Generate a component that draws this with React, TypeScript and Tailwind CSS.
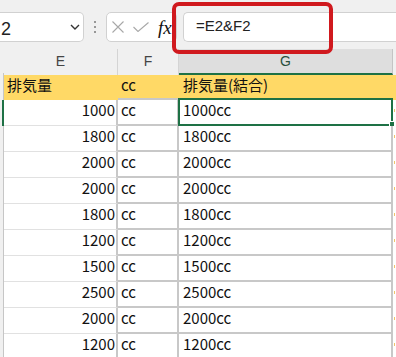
const volumes = [1000, 1800, 2000, 2000, 1800, 1200, 1500, 2500, 2000, 1200];

function DataRow({ value, active }: { value: number; active: boolean }) {
  return (
    <div className="grid h-[26px] grid-cols-[4px_114px_61px_214px_3px]">
      <div
        className={
          active
            ? 'bg-[#f0f0f0] border-r-2 border-r-[#1e7145]'
            : 'bg-[#f0f0f0] border-r border-r-[#c6c6c6]'
        }
      />
      <div className="border-b border-b-[#e1e1e1] border-r-2 border-r-[#c8c8c8] pr-[1px] text-right leading-[20px]">
        {value}
      </div>
      <div className="border-b-2 border-r-2 border-[#c8c8c8] pl-[3px] leading-[20px]">cc</div>
      <div className="relative border-b-2 border-r-2 border-[#c8c8c8] pl-[4px] leading-[20px]">
        {value}cc
        {active && (
          <>
            <div className="absolute -left-[1px] -top-[2px] -right-[2px] -bottom-[2px] border-2 border-[#1e7145]" />
            <div className="absolute -bottom-[3px] -right-[4px] h-[6px] w-[6px] border border-white bg-[#1e7145]" />
          </>
        )}
      </div>
      <div className="pl-[1px] pt-[9px]">
        <div className="h-[3px] w-[1px] bg-[#f0c36a]" />
      </div>
    </div>
  );
}

export default function App() {
  return (
    <div className="relative h-[357px] w-[396px] overflow-hidden bg-white font-['Noto_Sans_CJK_JP',sans-serif] text-[15px] text-[#111]">
      {/* formula bar */}
      <div className="flex h-[49px] items-start bg-[#f0f0f0] pt-[12px]">
        <div className="flex h-[30px] w-[84px] items-start justify-between rounded-r-[5px] border border-l-0 border-[#d1d1d1] bg-white pr-[3px]">
          <span className="pl-[1px] font-['Liberation_Sans',sans-serif] text-[18px] leading-[32px] text-[#222]">2</span>
          <svg className="mt-[11px]" width="10" height="6" viewBox="0 0 10 6">
            <polyline points="1,1 5,5 9,1" fill="none" stroke="#333" strokeWidth="1.4" />
          </svg>
        </div>
        <div className="ml-[10px] mt-[9px] flex flex-col gap-[3px]">
          <div className="h-[2px] w-[2px] rounded-full bg-[#7a7a7a]" />
          <div className="h-[2px] w-[2px] rounded-full bg-[#7a7a7a]" />
          <div className="h-[2px] w-[2px] rounded-full bg-[#7a7a7a]" />
        </div>
        <div className="ml-[10px] flex h-[30px] w-[71px] items-center rounded-[5px] border border-[#d1d1d1] bg-white pl-[5px]">
          <svg width="12" height="12" viewBox="0 0 12 12">
            <path d="M0.5 0.5 L11.5 11.5 M11.5 0.5 L0.5 11.5" stroke="#a8a8a8" strokeWidth="1.1" />
          </svg>
          <svg className="ml-[9px]" width="16" height="10" viewBox="0 0 16 10">
            <polyline points="0.5,5 5,9.5 15.5,0.5" fill="none" stroke="#a8a8a8" strokeWidth="1.1" />
          </svg>
          <span className="ml-[9px] font-['Liberation_Serif',serif] text-[19px] italic leading-none text-[#111]">fx</span>
        </div>
        <div className="ml-[6px] h-[30px] flex-1 rounded-l-[5px] border border-r-0 border-[#d1d1d1] bg-white pl-[12px] font-['Liberation_Sans',sans-serif] text-[15px] leading-[25px] text-[#222]">
          =E2&amp;F2
        </div>
      </div>

      {/* column headers */}
      <div className="grid h-[24px] grid-cols-[4px_114px_61px_214px_3px] font-['Liberation_Sans',sans-serif] text-[14px] leading-[24px] text-[#444]">
        <div className="bg-[#f0f0f0]" />
        <div className="border-r border-r-[#d4d4d4] bg-[#f0f0f0] text-center">E</div>
        <div className="border-r border-r-[#d4d4d4] bg-[#f0f0f0] text-center">F</div>
        <div className="border-b-2 border-r border-b-[#1e7145] border-r-[#c4c4c4] bg-[#dedede] text-center text-[#2a4f3c]">G</div>
        <div className="bg-[#f0f0f0]" />
      </div>

      {/* title row */}
      <div className="grid h-[27px] grid-cols-[4px_114px_61px_214px_3px] bg-[#ffd966] leading-[20px]">
        <div className="border-r border-r-[#c6c6c6] bg-[#f0f0f0]" />
        <div className="pl-[3px] pt-[2px]">排気量</div>
        <div className="border-b-2 border-b-[#c8c8c8] pl-[3px] pt-[2px]">cc</div>
        <div className="border-b-2 border-b-[#c8c8c8] pl-[4px] pt-[2px]">排気量(結合)</div>
        <div />
      </div>

      {volumes.map((v, i) => (
        <DataRow key={i} value={v} active={i === 0} />
      ))}

      {/* annotation */}
      <div className="absolute left-[172px] top-[2px] h-[52px] w-[161px] rounded-[7px] border-4 border-[#d0191e]" />
    </div>
  );
}
